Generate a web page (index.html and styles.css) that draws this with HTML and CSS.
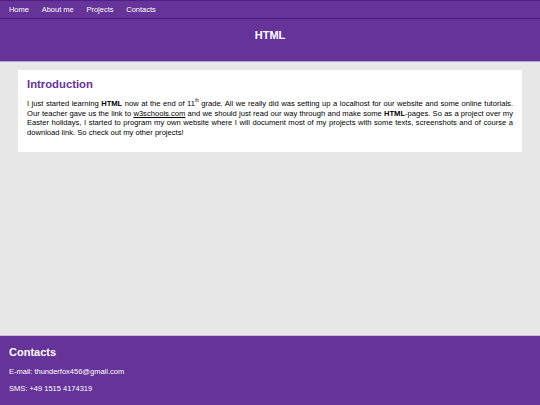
FILE: index.html
```html
<!DOCTYPE html>
<html lang="en">
<head>
<meta charset="utf-8">
<title>HTML</title>
<link rel="stylesheet" href="styles.css">
</head>
<body>
<div class="page">
  <nav class="nav">
    <a href="#">Home</a>
    <a href="#">About me</a>
    <a href="#">Projects</a>
    <a href="#">Contacts</a>
  </nav>
  <header class="header">
    <h1>HTML</h1>
  </header>
  <main class="main">
    <section class="card">
      <h2>Introduction</h2>
      <p>I just started learning <b>HTML</b> now at the end of 11<sup>th</sup> grade. All we really did was setting up a localhost for our website and some online tutorials. Our teacher gave us the link to <a href="#">w3schools.com</a> and we should just read our way through and make some <b>HTML</b>-pages. So as a project over my Easter holidays, I started to program my own website where I will document most of my projects with some texts, screenshots and of course a download link. So check out my other projects!</p>
    </section>
  </main>
  <footer class="footer">
    <h3>Contacts</h3>
    <p>E-mail: thunderfox456@gmail.com</p>
    <p>SMS: +49 1515 4174319</p>
  </footer>
</div>
</body>
</html>
```
FILE: styles.css
```css
html, body {
  margin: 0;
  padding: 0;
  height: 100%;
}
body {
  background: #e7e7e7;
  font-family: "Liberation Sans", Arial, sans-serif;
  color: #000;
}
.page {
  display: flex;
  flex-direction: column;
  min-height: 100%;
}
.nav {
  background: #663399;
  border-top: 1px solid #4f1f85;
  border-bottom: 1px solid #4a1a80;
  height: 17px;
  display: flex;
  align-items: center;
  padding: 0 2.6px;
}
.nav a {
  color: #fff;
  text-decoration: none;
  font-size: 7.5px;
  padding: 0 6.35px;
}
.header {
  background: #663399;
  height: 43px;
  box-sizing: border-box;
  padding-bottom: 9px;
  border-bottom: 1px solid #b9a3d3;
  display: flex;
  align-items: center;
  justify-content: center;
}
.header h1 {
  margin: 0;
  color: #fff;
  font-size: 11px;
  line-height: 13px;
  font-weight: bold;
}
.main {
  flex: 1;
  padding: 8px 18px;
}
.card {
  background: #fff;
  padding: 7px 9px 1px;
}
.card h2 {
  margin: 0 0 8px;
  color: #663399;
  font-size: 11.3px;
  line-height: 14px;
}
.card p {
  margin: 0 0 13px;
  font-size: 7.6px;
  line-height: 9.7px;
  text-align: justify;
}
.card sup {
  font-size: 4.5px;
  line-height: 1;
  vertical-align: top;
}
.card a {
  color: #000;
  text-decoration: underline;
}
.footer {
  background: #663399;
  border-top: 1px solid #c9bcd9;
  color: #fff;
  box-sizing: border-box;
  height: 70px;
  padding: 9px 9px 0;
}
.footer h3 {
  margin: 0 0 8px;
  font-size: 11px;
  line-height: 14px;
}
.footer p {
  margin: 0 0 7px;
  font-size: 7.5px;
  line-height: 10px;
}
```
